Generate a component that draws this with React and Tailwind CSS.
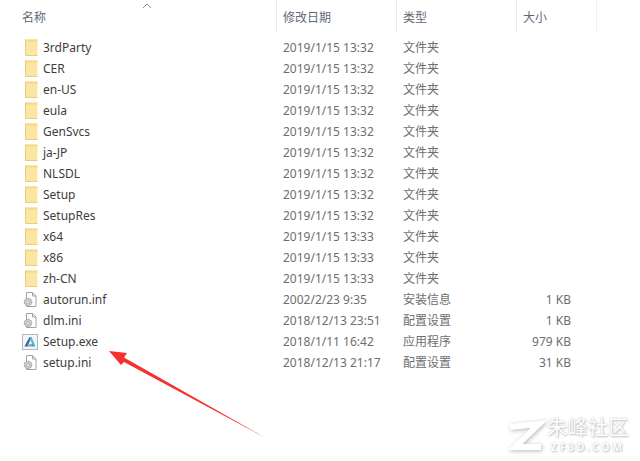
const FONT = '"Noto Sans", "Noto Sans CJK SC", sans-serif'

const folders = [
  ['3rdParty', '2019/1/15 13:32'],
  ['CER', '2019/1/15 13:32'],
  ['en-US', '2019/1/15 13:32'],
  ['eula', '2019/1/15 13:32'],
  ['GenSvcs', '2019/1/15 13:32'],
  ['ja-JP', '2019/1/15 13:32'],
  ['NLSDL', '2019/1/15 13:32'],
  ['Setup', '2019/1/15 13:32'],
  ['SetupRes', '2019/1/15 13:32'],
  ['x64', '2019/1/15 13:33'],
  ['x86', '2019/1/15 13:33'],
  ['zh-CN', '2019/1/15 13:33'],
]

const files = [
  { name: 'autorun.inf', date: '2002/2/23 9:35', type: '安装信息', size: '1 KB', icon: 'gear' },
  { name: 'dlm.ini', date: '2018/12/13 23:51', type: '配置设置', size: '1 KB', icon: 'gear' },
  { name: 'Setup.exe', date: '2018/1/11 16:42', type: '应用程序', size: '979 KB', icon: 'app' },
  { name: 'setup.ini', date: '2018/12/13 21:17', type: '配置设置', size: '31 KB', icon: 'gear' },
]

function FolderIcon() {
  return (
    <svg width="13" height="17" viewBox="0 0 13 17">
      <path d="M0.5 0.5h12v16H0.5z" fill="#fbe6a4" />
      <path d="M0.5 0.5h12v2H0.5z" fill="#f7d987" />
      <path d="M0.5 0.5v16h12" fill="none" stroke="#eccd7e" strokeWidth="1" />
    </svg>
  )
}

function GearFileIcon() {
  return (
    <svg width="16" height="17" viewBox="0 0 16 17">
      <path d="M4.5 1.5h6l3.5 3.5v10.5h-9.5z" fill="#fff" stroke="#a3a3a3" />
      <path d="M10.5 1.5v3.5h3.5" fill="none" stroke="#a3a3a3" />
      <circle cx="6" cy="11" r="3.8" fill="#c9c9c9" stroke="#929292" strokeDasharray="1.5 1" />
      <circle cx="6" cy="11" r="1.4" fill="#fff" stroke="#9a9a9a" strokeWidth="0.6" />
    </svg>
  )
}

function AppIcon() {
  return (
    <svg width="16" height="16" viewBox="0 0 16 16">
      <rect x="0.5" y="0.5" width="15" height="15" fill="#f3f4f5" stroke="#b4b8bb" />
      <path d="M2.5 12.5 7.5 3h2L5.5 12.5z" fill="#2a6f9c" />
      <path d="M7.5 3h2l4 9.5h-2.6z" fill="#4fbccb" />
      <path d="M5 12.5 8 10l3 .3.6 2.2z" fill="#1f5c86" opacity="0.55" />
    </svg>
  )
}

function Row({ icon, name, date, type, size }) {
  return (
    <div className="flex h-[21px] items-center text-[12px]">
      <div className="flex w-[43px] shrink-0 justify-end pr-[5px]">{icon}</div>
      <div className="w-[240px] shrink-0 text-[#3d3d3d]">{name}</div>
      <div className="w-[120px] shrink-0 text-[#6e6e6e]">{date}</div>
      <div className="w-[100px] shrink-0 text-[#6e6e6e]">{type}</div>
      <div className="w-[68px] shrink-0 text-right text-[#6e6e6e]">{size}</div>
    </div>
  )
}

export default function App() {
  return (
    <div className="relative h-[461px] w-[640px] overflow-hidden bg-white" style={{ fontFamily: FONT }}>
      {/* column headers */}
      <div className="flex h-[32px] text-[12px] text-[#5f6a78]">
        <div className="relative w-[277px] border-r border-[#e8eaec] pl-[22px] pt-[9px]">
          名称
          <svg className="absolute left-[142px] top-[3px]" width="10" height="6" viewBox="0 0 10 6">
            <path d="M1 5l4-4 4 4" fill="none" stroke="#8a8f96" strokeWidth="1" />
          </svg>
        </div>
        <div className="w-[120px] border-r border-[#e8eaec] pl-[6px] pt-[9px]">修改日期</div>
        <div className="w-[120px] border-r border-[#e8eaec] pl-[6px] pt-[9px]">类型</div>
        <div className="w-[80px] border-r border-[#eef0f1] pl-[6px] pt-[9px]">大小</div>
      </div>

      {/* file rows */}
      <div className="pt-[5px]">
        {folders.map(([name, date]) => (
          <Row key={name} icon={<FolderIcon />} name={name} date={date} type="文件夹" />
        ))}
        {files.map((f) => (
          <Row
            key={f.name}
            icon={f.icon === 'app' ? <AppIcon /> : <GearFileIcon />}
            name={f.name}
            date={f.date}
            type={f.type}
            size={f.size}
          />
        ))}
      </div>

      {/* red arrow drawn over the list */}
      <svg className="absolute left-0 top-0" width="640" height="461" viewBox="0 0 640 461">
        <path d="M109 351 127 353 124 357.5 264 437 124 362 121 365z" fill="#f5312f" />
      </svg>

      {/* watermark */}
      <svg className="absolute left-[505px] top-[418px] drop-shadow-[1px_1px_2px_#b5b5b5]" width="42" height="36" viewBox="0 0 42 36">
        <path d="M5 9 34 6 10 29 36 29" fill="none" stroke="#fff" strokeWidth="6" />
      </svg>
      <div className="absolute left-[546px] top-[418px] flex w-[84px] flex-col items-center text-white [text-shadow:0_0_2px_#bdbdbd,1px_1px_2px_#c4c4c4]">
        <div className="text-[20px] leading-[20px] tracking-[0.5px]">朱峰社区</div>
        <div className="mt-[4px] text-[10px] font-bold leading-[10px] tracking-[3px]">ZF3D.COM</div>
      </div>
    </div>
  )
}
